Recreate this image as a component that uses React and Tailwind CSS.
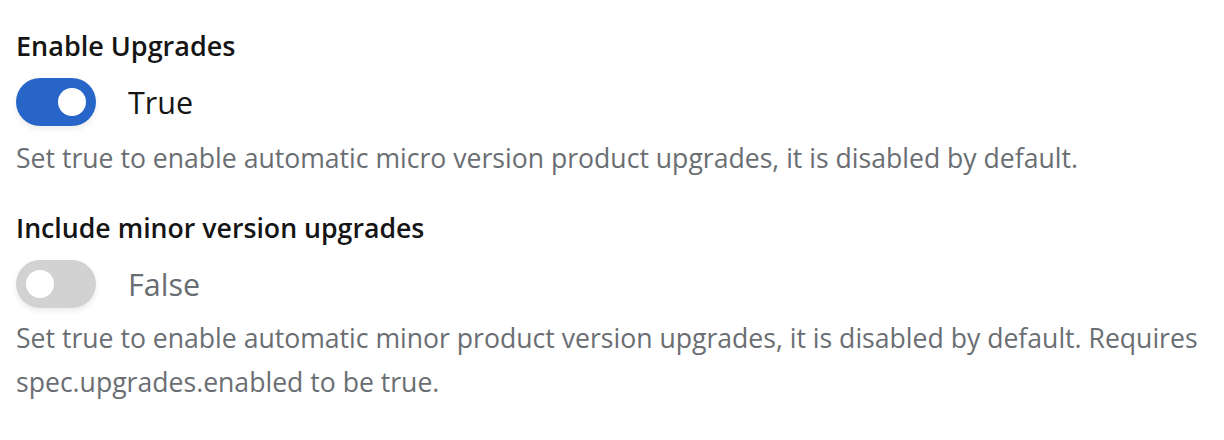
import React, { useState } from "react";

function Toggle({ checked, onChange, label }) {
  return (
    <button
      type="button"
      role="switch"
      aria-checked={checked}
      onClick={() => onChange(!checked)}
      className="flex items-center gap-8"
    >
      <span
        className={`flex h-12 w-20 items-center rounded-full px-[10px] shadow-[0_3px_6px_rgba(0,0,0,0.08)] ${
          checked ? "justify-end bg-[#2766c8]" : "justify-start bg-[#d2d2d2]"
        }`}
      >
        <span className="h-7 w-7 rounded-full bg-white" />
      </span>
      <span className={`text-[30.5px] leading-8 ${checked ? "text-[#151515]" : "text-[#6a6e73]"}`}>
        {label}
      </span>
    </button>
  );
}

export default function App() {
  const [enabled, setEnabled] = useState(true);
  const [minor, setMinor] = useState(false);

  return (
    <div className="h-[440px] w-[1224px] bg-white px-4 pt-[30px] font-['Open_Sans',sans-serif]">
      <h3 className="text-[27px] font-semibold leading-8 text-[#151515]">Enable Upgrades</h3>
      <div className="mt-4">
        <Toggle checked={enabled} onChange={setEnabled} label={enabled ? "True" : "False"} />
      </div>
      <p className="mt-[10px] text-[26.6px] leading-[44px] text-[#6a6e73]">
        Set true to enable automatic micro version product upgrades, it is disabled by default.
      </p>

      <h3 className="mt-8 text-[26.7px] font-semibold leading-8 text-[#151515]">
        Include minor version upgrades
      </h3>
      <div className="mt-4">
        <Toggle checked={minor} onChange={setMinor} label={minor ? "True" : "False"} />
      </div>
      <p className="mt-2 w-[1204px] text-[26.6px] leading-[44px] text-[#6a6e73]">
        Set true to enable automatic minor product version upgrades, it is disabled by default. Requires
        spec.upgrades.enabled to be true.
      </p>
    </div>
  );
}
